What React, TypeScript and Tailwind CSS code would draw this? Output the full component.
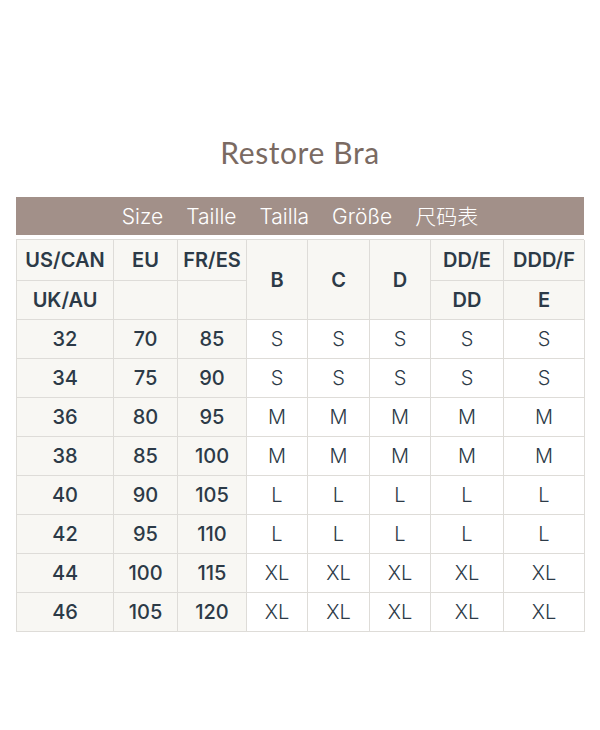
import React from 'react';

const cols = 'grid-cols-[97px_64px_69px_61px_62px_61px_73px_81px]';

const rows: [string, string, string, string][] = [
  ['32', '70', '85', 'S'],
  ['34', '75', '90', 'S'],
  ['36', '80', '95', 'M'],
  ['38', '85', '100', 'M'],
  ['40', '90', '105', 'L'],
  ['42', '95', '110', 'L'],
  ['44', '100', '115', 'XL'],
  ['46', '105', '120', 'XL'],
];

const cell = 'flex items-center justify-center border-r border-b border-[#dedcd8]';

export default function App() {
  return (
    <div
      className="flex h-[730px] w-[600px] flex-col items-center bg-white text-[#2c3a47]"
      style={{ fontFamily: 'Inter, "Noto Sans CJK SC", sans-serif' }}
    >
      <h1
        className="mt-[132px] text-[30px] leading-[40px] font-normal tracking-[0.6px] text-[#7a6a62]"
        style={{ fontFamily: 'Lato, sans-serif' }}
      >
        Restore Bra
      </h1>

      <div className="mt-[25px] flex h-[38px] w-[568px] items-center justify-center gap-[23px] bg-[#a29089] pt-[2px] text-[21px] font-light text-white">
        <span>Size</span>
        <span>Taille</span>
        <span>Tailla</span>
        <span>Größe</span>
        <span>尺码表</span>
      </div>

      <div className={`mt-[4px] grid w-[568px] ${cols} grid-rows-[41px_39px] border-t border-l border-[#dedcd8] bg-[#f8f7f3] text-[20px] font-semibold`}>
        <div className={cell}>US/CAN</div>
        <div className={cell}>EU</div>
        <div className={cell}>FR/ES</div>
        <div className={`${cell} row-span-2`}>B</div>
        <div className={`${cell} row-span-2`}>C</div>
        <div className={`${cell} row-span-2`}>D</div>
        <div className={cell}>DD/E</div>
        <div className={cell}>DDD/F</div>
        <div className={cell}>UK/AU</div>
        <div className={cell}></div>
        <div className={cell}></div>
        <div className={cell}>DD</div>
        <div className={cell}>E</div>
      </div>

      <div className={`grid w-[568px] ${cols} auto-rows-[39px] border-l border-[#dedcd8] text-[20px]`}>
        {rows.map(([us, eu, fr, size]) => (
          <React.Fragment key={us}>
            <div className={`${cell} bg-[#f8f7f3] font-medium`}>{us}</div>
            <div className={`${cell} bg-[#f8f7f3] font-medium`}>{eu}</div>
            <div className={`${cell} bg-[#f8f7f3] font-medium`}>{fr}</div>
            {[0, 1, 2, 3, 4].map((i) => (
              <div key={i} className={`${cell} font-light`}>
                {size}
              </div>
            ))}
          </React.Fragment>
        ))}
      </div>
    </div>
  );
}
